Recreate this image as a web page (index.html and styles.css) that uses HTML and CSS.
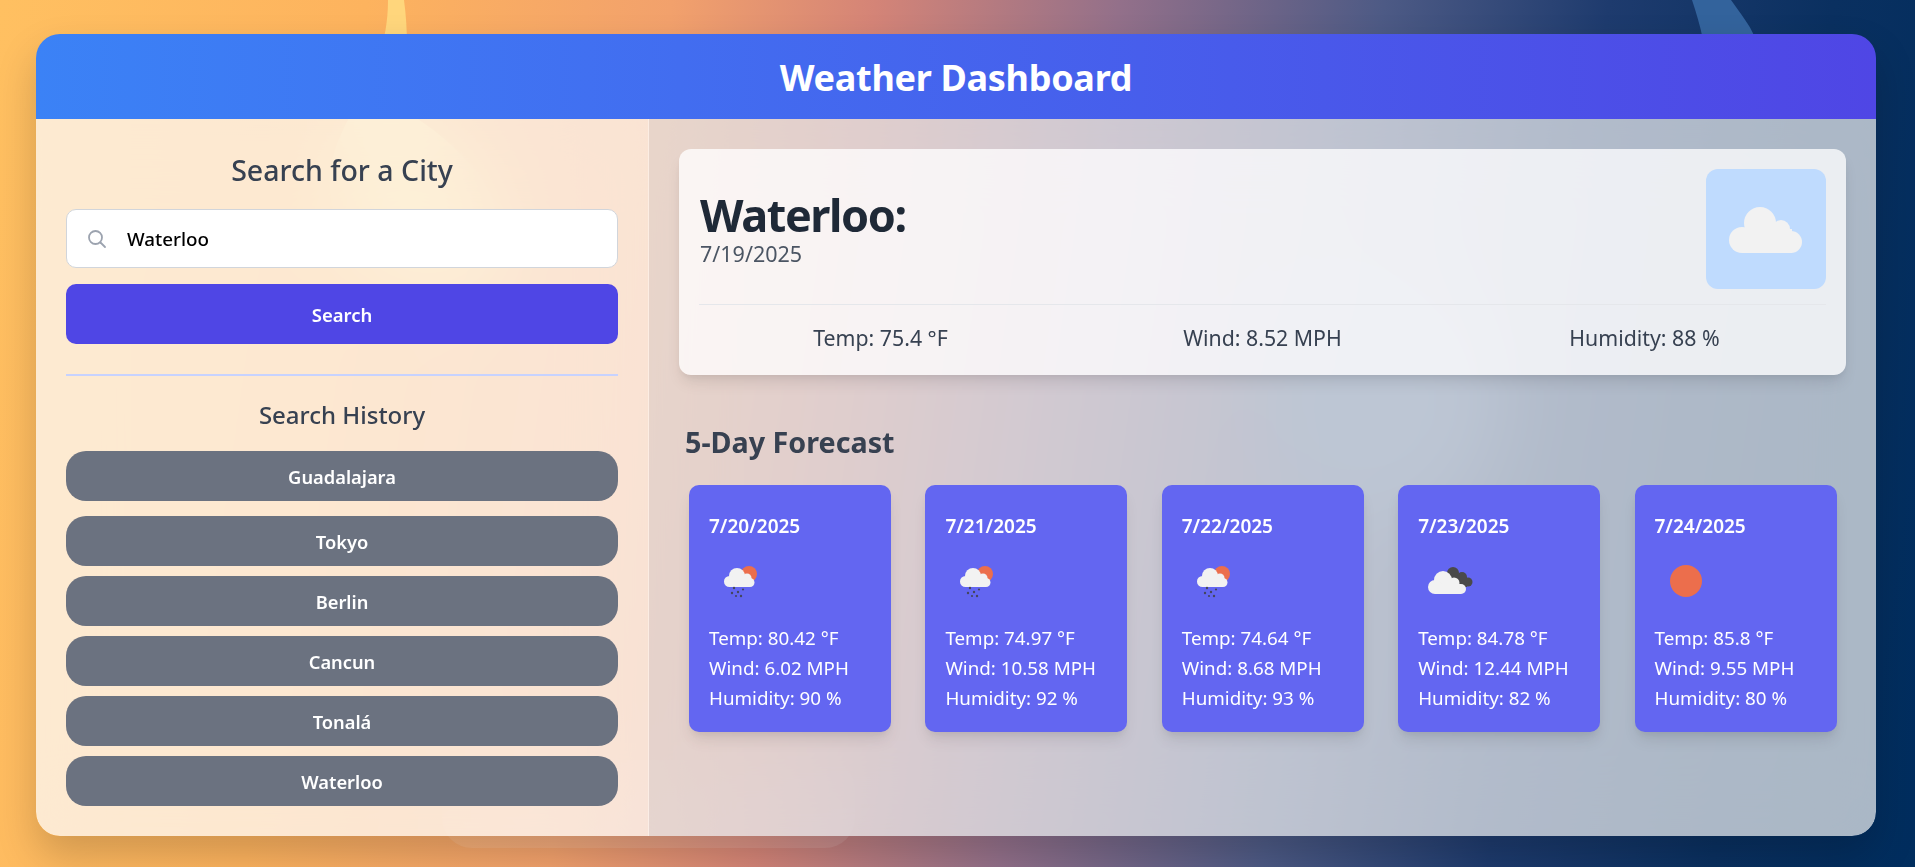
FILE: index.html
```html
<!DOCTYPE html>
<html lang="en">
<head>
<meta charset="utf-8">
<title>Weather Dashboard</title>
<link rel="stylesheet" href="styles.css">
</head>
<body>
<svg class="backdrop" viewBox="0 0 1915 867" aria-hidden="true">
  <path class="backdrop-sun" d="M388 0 H404 C408 30 408 60 404 110 C470 150 520 210 500 280 C440 320 340 280 330 190 C326 120 388 90 388 0 Z"/>
  <path class="backdrop-ring" d="M1692 0 H1731 C1745 20 1750 25 1756 40 L1703 40 C1700 25 1696 12 1692 0 Z"/>
  <circle class="backdrop-glow" cx="1380" cy="400" r="120"/>
  <rect class="backdrop-tray" x="442" y="760" width="413" height="88" rx="30"/>
</svg>
<main class="app">
  <header class="app-header"><h1>Weather Dashboard</h1></header>
  <div class="app-body">
    <aside class="sidebar">
      <h2 class="sidebar-title">Search for a City</h2>
      <div class="search-field">
        <svg class="search-icon" viewBox="0 0 20 20" aria-hidden="true"><circle cx="8.5" cy="8.5" r="6.5"/><path d="M13.5 13.5 L18 18"/></svg>
        <input class="search-input" type="text" value="Waterloo">
      </div>
      <button class="search-button">Search</button>
      <hr class="sidebar-rule">
      <h3 class="history-title">Search History</h3>
      <div class="history">
        <button class="history-item history-item-first">Guadalajara</button>
        <button class="history-item">Tokyo</button>
        <button class="history-item">Berlin</button>
        <button class="history-item">Cancun</button>
        <button class="history-item">Tonalá</button>
        <button class="history-item">Waterloo</button>
      </div>
    </aside>
    <section class="content">
      <article class="current">
        <div class="current-top">
          <div class="current-head">
            <h2 class="current-city">Waterloo:</h2>
            <p class="current-date">7/19/2025</p>
          </div>
          <div class="current-icon">
            <svg viewBox="0 0 120 120" aria-hidden="true"><g class="cloud soft"><circle cx="54" cy="54" r="16"/><circle cx="75" cy="60" r="9"/><circle cx="36" cy="71" r="13"/><circle cx="85" cy="73" r="11"/><rect x="36" y="60" width="50" height="24"/></g></svg>
          </div>
        </div>
        <div class="current-stats">
          <span>Temp: 75.4 °F</span>
          <span>Wind: 8.52 MPH</span>
          <span>Humidity: 88 %</span>
        </div>
      </article>
      <h2 class="forecast-title">5-Day Forecast</h2>
      <div class="forecast">
        <article class="day">
          <p class="day-date">7/20/2025</p>
          <svg class="day-icon" viewBox="0 0 60 60" aria-hidden="true"><use href="#rain-icon"/></svg>
          <p class="day-line">Temp: 80.42 °F</p>
          <p class="day-line">Wind: 6.02 MPH</p>
          <p class="day-line">Humidity: 90 %</p>
        </article>
        <article class="day">
          <p class="day-date">7/21/2025</p>
          <svg class="day-icon" viewBox="0 0 60 60" aria-hidden="true"><use href="#rain-icon"/></svg>
          <p class="day-line">Temp: 74.97 °F</p>
          <p class="day-line">Wind: 10.58 MPH</p>
          <p class="day-line">Humidity: 92 %</p>
        </article>
        <article class="day">
          <p class="day-date">7/22/2025</p>
          <svg class="day-icon" viewBox="0 0 60 60" aria-hidden="true"><use href="#rain-icon"/></svg>
          <p class="day-line">Temp: 74.64 °F</p>
          <p class="day-line">Wind: 8.68 MPH</p>
          <p class="day-line">Humidity: 93 %</p>
        </article>
        <article class="day">
          <p class="day-date">7/23/2025</p>
          <svg class="day-icon" viewBox="0 0 60 60" aria-hidden="true"><g class="cloud-dark"><circle cx="35" cy="22" r="6"/><circle cx="44" cy="26" r="5"/><circle cx="50" cy="31" r="4.500"/><rect x="36" y="26" width="13" height="10"/></g><g class="cloud"><circle cx="25" cy="29" r="9"/><circle cx="36" cy="32" r="5.500"/><circle cx="17" cy="36" r="7"/><circle cx="43" cy="38" r="5"/><rect x="17" y="33" width="26" height="10"/></g></svg>
          <p class="day-line">Temp: 84.78 °F</p>
          <p class="day-line">Wind: 12.44 MPH</p>
          <p class="day-line">Humidity: 82 %</p>
        </article>
        <article class="day">
          <p class="day-date">7/24/2025</p>
          <svg class="day-icon" viewBox="0 0 60 60" aria-hidden="true"><circle class="sun" cx="31" cy="30" r="16"/></svg>
          <p class="day-line">Temp: 85.8 °F</p>
          <p class="day-line">Wind: 9.55 MPH</p>
          <p class="day-line">Humidity: 80 %</p>
        </article>
      </div>
    </section>
  </div>
</main>
<svg class="icon-defs" aria-hidden="true"><defs><g id="rain-icon"><circle class="sun" cx="40" cy="23" r="8"/><g class="cloud"><circle cx="28" cy="25" r="8"/><circle cx="38" cy="27" r="4.500"/><circle cx="20.500" cy="30.500" r="5.500"/><circle cx="41" cy="31.500" r="4.500"/><rect x="20" y="26" width="21" height="10"/></g><g class="drops"><circle cx="25" cy="37" r="1.200"/><circle cx="34" cy="38.500" r="1.100"/><circle cx="29" cy="41" r="1.200"/><circle cx="23" cy="42" r="1.200"/><circle cx="27" cy="45" r="1.100"/><circle cx="32" cy="45" r="1.200"/></g></g></defs></svg>
</body>
</html>
```

FILE: styles.css
```css
* { box-sizing: border-box; }
html, body { height: 100%; }
body {
  margin: 0;
  height: 867px;
  overflow: hidden;
  position: relative;
  padding: 34px 0 0 36px;
  font-family: "Noto Sans", "Open Sans", sans-serif;
  background: linear-gradient(98deg, #ffc061 0%, #fdb35e 18%, #f2a16c 33%, #d48477 43%, #93708a 55%, #4d5a85 68%, #1e3b6e 79%, #0a3060 90%, #002d5e 100%);
}
h1, h2, h3, p { margin: 0; }
.backdrop { position: absolute; left: 0; top: 0; width: 1915px; height: 867px; }
.icon-defs { position: absolute; width: 0; height: 0; }
.backdrop-sun { fill: #ffd67c; }
.backdrop-ring { fill: #33639c; }
.backdrop-glow { fill: #4a6694; }
.backdrop-tray { fill: rgba(255, 255, 255, 0.1); }
.app {
  position: relative;
  width: 1840px;
  border-radius: 24px;
  overflow: hidden;
  box-shadow: 0 20px 40px rgba(0, 0, 0, 0.18);
}
.app-header {
  height: 85px;
  padding-top: 2px;
  display: flex;
  align-items: center;
  justify-content: center;
  background: linear-gradient(to right, #3b82f6, #4f46e5);
  color: #fff;
}
.app-header h1 { font-size: 36px; font-weight: 700; letter-spacing: -0.3px; }
.app-body { display: flex; }
.sidebar {
  width: 613px;
  padding: 30px;
  flex: none;
  background: rgba(252, 249, 244, 0.76);
  border-right: 1px solid rgba(255, 255, 255, 0.35);
  backdrop-filter: blur(40px);
}
.sidebar-title { font-size: 28.500px; line-height: 42px; font-weight: 500; color: #374151; text-align: center; margin-bottom: 18px; }
.search-field {
  height: 59px;
  display: flex;
  align-items: center;
  gap: 20px;
  padding: 0 20px;
  background: #fff;
  border: 1px solid #d1d5db;
  border-radius: 10px;
  margin-bottom: 16px;
}
.search-icon { width: 20px; height: 20px; fill: none; stroke: #9ca3af; stroke-width: 1.800; stroke-linecap: round; flex: none; }
.search-input { flex: 1; min-width: 0; border: 0; outline: 0; padding: 0; background: transparent; font: 500 18.800px "Noto Sans", sans-serif; color: #000; }
.search-button {
  display: block;
  width: 100%;
  height: 60px;
  border: 0;
  border-radius: 10px;
  background: #4f46e5;
  color: #fff;
  font: 600 18.500px "Noto Sans", sans-serif;
}
.sidebar-rule { height: 2px; margin: 30px 0 21px; border: 0; background: #c7d2fe; }
.history-title { font-size: 24px; line-height: 36px; font-weight: 500; color: #374151; text-align: center; margin-bottom: 18px; }
.history { display: flex; flex-direction: column; gap: 10px; }
.history-item {
  height: 50px;
  border: 0;
  border-radius: 20px;
  background: #6b7280;
  color: #fff;
  font: 600 18.300px "Noto Sans", sans-serif;
}
.history-item-first { margin-bottom: 5px; }
.content {
  flex: 1;
  min-width: 0;
  padding: 30px;
  background: rgba(230, 232, 235, 0.74);
  backdrop-filter: blur(40px);
}
.current {
  height: 226px;
  padding: 20px;
  border-radius: 12px;
  background: rgba(255, 255, 255, 0.76);
  box-shadow: 0 10px 15px -3px rgba(0, 0, 0, 0.1), 0 4px 6px -2px rgba(0, 0, 0, 0.05);
}
.current-top { display: flex; justify-content: space-between; align-items: center; padding-bottom: 15px; border-bottom: 1px solid #e5e7eb; }
.current-head { padding: 0 0 6px 1px; }
.current-city { font-size: 45px; line-height: 55px; font-weight: 700; letter-spacing: -1.4px; color: #1f2937; }
.current-date { font-size: 21.500px; line-height: 24px; color: #4b5563; }
.current-icon { width: 120px; height: 120px; border-radius: 12px; background: #bfdbfe; }
.current-icon svg { display: block; width: 120px; height: 120px; }
.current-stats { display: grid; grid-template-columns: repeat(3, 382px); justify-content: center; text-align: center; padding-top: 19px; font-size: 21.300px; line-height: 28px; color: #374151; }
.forecast-title { font-size: 28.700px; line-height: 42px; font-weight: 700; color: #374151; margin: 46px 0 22px 6px; }
.forecast { display: flex; justify-content: space-between; padding: 0 9.5px 0 10px; }
.day {
  width: 202px;
  height: 247px;
  padding: 28px 20px 0;
  border-radius: 10px;
  background: #6366f1;
  color: #fff;
  box-shadow: 0 10px 15px -3px rgba(0, 0, 0, 0.1), 0 4px 6px -2px rgba(0, 0, 0, 0.05);
}
.day-date { font-size: 19px; line-height: 27px; font-weight: 600; margin-bottom: 11px; }
.day-icon { display: block; width: 60px; height: 60px; margin-bottom: 12px; }
.day-line { font-size: 18.800px; line-height: 30px; }
.cloud { fill: #f2f2f2; }
.cloud.soft { filter: blur(0.6px); }
.cloud-dark { fill: #4a4a4a; }
.sun { fill: #ec6e4c; }
.drops { fill: #44465e; }
```
